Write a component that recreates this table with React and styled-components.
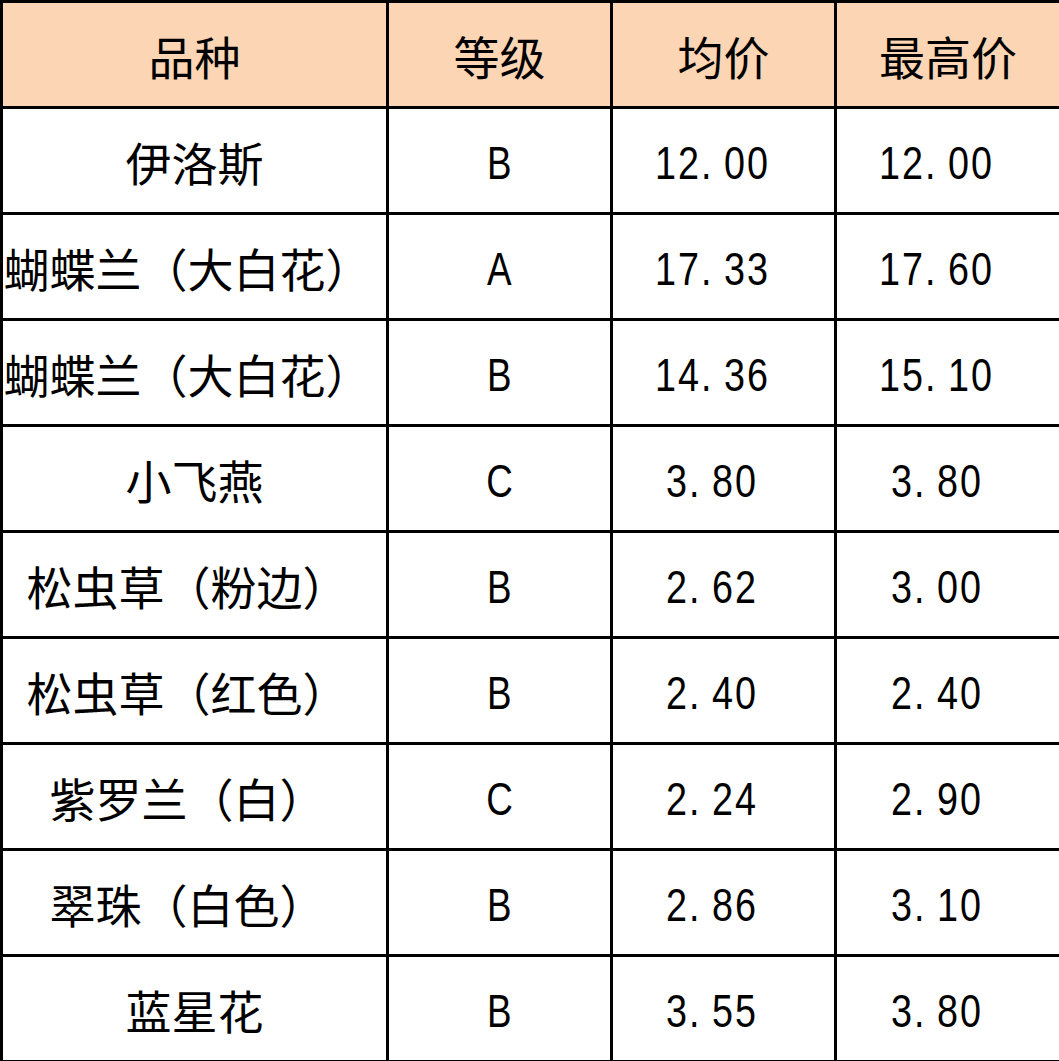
import React from "react";
import styled, { createGlobalStyle } from "styled-components";

const rows = [
  { name: "伊洛斯", grade: "B", avg: "12.00", max: "12.00" },
  { name: "蝴蝶兰（大白花）", grade: "A", avg: "17.33", max: "17.60" },
  { name: "蝴蝶兰（大白花）", grade: "B", avg: "14.36", max: "15.10" },
  { name: "小飞燕", grade: "C", avg: "3.80", max: "3.80" },
  { name: "松虫草（粉边）", grade: "B", avg: "2.62", max: "3.00" },
  { name: "松虫草（红色）", grade: "B", avg: "2.40", max: "2.40" },
  { name: "紫罗兰（白）", grade: "C", avg: "2.24", max: "2.90" },
  { name: "翠珠（白色）", grade: "B", avg: "2.86", max: "3.10" },
  { name: "蓝星花", grade: "B", avg: "3.55", max: "3.80" },
];

const GlobalStyle = createGlobalStyle`
  html, body {
    margin: 0;
    padding: 0;
    background: #fff;
  }
`;

// half-width slots, like a 黑体 cell in a spreadsheet
function Mono({ text }) {
  return (
    <MonoText>
      {text.split("").map((ch, i) => (
        <Slot key={i}>
          <Narrow>{ch}</Narrow>
        </Slot>
      ))}
    </MonoText>
  );
}

export default function App() {
  return (
    <>
      <GlobalStyle />
      <Table>
        <colgroup>
          <col width="386" />
          <col width="224" />
          <col width="224" />
          <col width="225" />
        </colgroup>
        <thead>
          <tr>
            <Th>品种</Th>
            <Th>等级</Th>
            <Th>均价</Th>
            <Th>最高价</Th>
          </tr>
        </thead>
        <tbody>
          {rows.map((row, index) => (
            <tr key={index}>
              <NameCell $paren={row.name.includes("（")}>{row.name}</NameCell>
              <Td>
                <Letter>{row.grade}</Letter>
              </Td>
              <Td>
                <Mono text={row.avg} />
              </Td>
              <Td>
                <Mono text={row.max} />
              </Td>
            </tr>
          ))}
        </tbody>
      </Table>
    </>
  );
}

const Table = styled.table`
  width: 1059px;
  height: 1061px;
  table-layout: fixed;
  border-collapse: collapse;
  border: 3px solid #000;
  font-family: "Noto Sans CJK SC", "Noto Sans", sans-serif;
  color: #000;

  tr {
    height: 106px;
  }
`;

const Th = styled.th`
  background-color: #fcd5b4;
  border: 3px solid #000;
  font-size: 46px;
  font-weight: normal;
  text-align: center;
  vertical-align: middle;
  padding: 0;
  line-height: 1;
`;

const Td = styled.td`
  border: 3px solid #000;
  font-size: 46px;
  text-align: center;
  vertical-align: middle;
  padding: 0;
  line-height: 1;
  white-space: nowrap;
  overflow: visible;
`;

const NameCell = styled(Td)`
  padding-right: ${(p) => (p.$paren ? "14px" : "0")};
`;

const Letter = styled.span`
  display: inline-block;
  font-family: "Liberation Sans", Arial, sans-serif;
  transform: scaleX(0.8);
`;

const MonoText = styled.span`
  display: inline-block;
  font-family: "Liberation Sans", Arial, sans-serif;
  padding-right: 0.5em;
`;

const Slot = styled.span`
  display: inline-block;
  width: 0.5em;
  text-align: left;
`;

const Narrow = styled.span`
  display: inline-block;
  transform: scaleX(0.82);
  transform-origin: left center;
`;
